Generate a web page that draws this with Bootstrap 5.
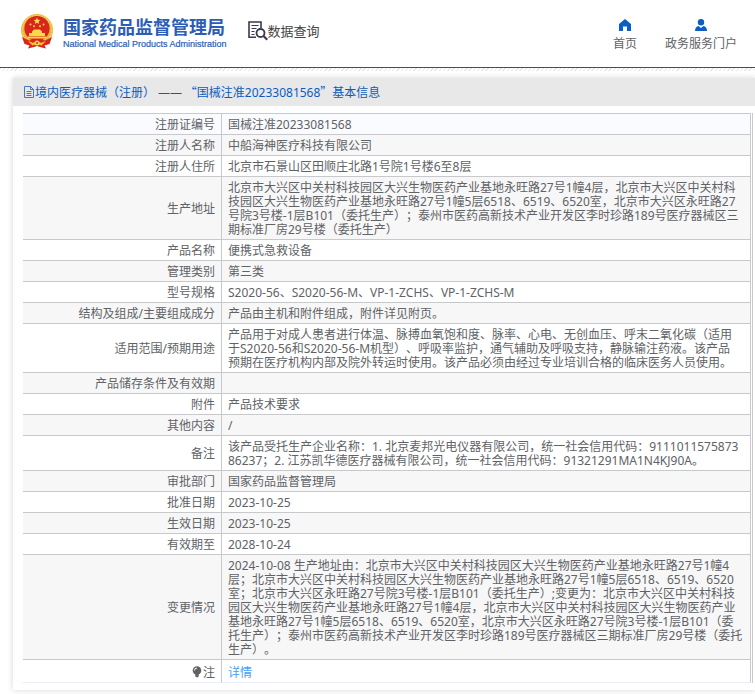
<!DOCTYPE html>
<html lang="zh-CN">
<head>
<meta charset="utf-8">
<meta name="viewport" content="width=device-width, initial-scale=1">
<title>国家药品监督管理局 数据查询</title>
<link href="https://cdn.jsdelivr.net/npm/bootstrap@5.3.0/dist/css/bootstrap.min.css" rel="stylesheet">
<style>
body{font-family:"Noto Sans","Noto Sans CJK SC",sans-serif;font-size:12px;line-height:14px;color:#606266;background:#fff;text-spacing-trim:space-all;font-feature-settings:"chws" 0}
a{text-decoration:none}
.site-head{height:67px;padding:0 18px 6px 20px}
.head-rule{height:4px;border-top:1px solid #0b5cad;background:repeating-linear-gradient(135deg,#e8e8e8 0 1px,#fff 1px 3px)}
.brand-cn{font:700 18px/24px "Noto Sans CJK SC",sans-serif;color:#2b5eb4}
.brand-en{font:9px/12px "Liberation Sans",sans-serif;color:#2b5eb4;-webkit-text-stroke:.2px #2b5eb4}
.brand-text{margin-left:9px;padding-top:2px}
.query{margin-left:21px;font-size:13px;line-height:20px;color:#444}
.top-link{color:#606266;line-height:16px}
.top-link svg{margin-bottom:5px}
.top-nav{gap:28px;padding-top:10px}
.panel{margin:7px 0 4px 13px;box-shadow:0 0 6px rgba(0,0,0,.16);padding-bottom:7px}
.panel-title{background:#e8e8e8;color:#0b5cbd;height:28px;padding:0 10px;font-size:12px;font-weight:400;line-height:14px;margin:0 0 7px}
.wide-quote{font-family:"Noto Sans CJK SC",sans-serif}
.info-wrap{margin:0 2px 0 10px;border-right:1px solid #c8c9cc;padding-right:1px}
.info{width:100%;table-layout:fixed;border-collapse:separate;border-spacing:0}
.info th,.info td{border-top:1px solid #c8c9cc;border-right:1px solid #c8c9cc;padding:4px 6px 2px;height:21px;vertical-align:middle;font-weight:400;white-space:nowrap}
.info th{text-align:right;width:199px}
.info tr:nth-child(even)>*{background:#f7f7f7}
.info tr:first-child>*{background:#fafbfe}
.info tr:last-child>*{border-bottom:1px solid #ebeef5;height:24px;padding:6px 6px 2px}
.info th svg{vertical-align:-1px}
.info a{color:#409eff}
</style>
<script src="https://cdn.jsdelivr.net/npm/bootstrap@5.3.0/dist/js/bootstrap.bundle.min.js"></script>
</head>
<body>
<header>
<div class="site-head d-flex align-items-center">
<svg width="34" height="36" viewBox="0 0 34 36" aria-hidden="true">
<circle cx="17" cy="17" r="16" fill="#e9b63c"/><circle cx="17" cy="17" r="14.600" fill="none" stroke="#f6d465" stroke-width="1.200" stroke-dasharray="2 1"/>
<circle cx="17" cy="15.500" r="12.600" fill="#d9251d"/>
<path d="M17 4.500l1 2.300 2.400.2-1.800 1.600.6 2.400-2.200-1.300-2.200 1.300.6-2.400-1.800-1.600 2.400-.2z" fill="#f8d94c"/>
<g fill="#f8d94c"><circle cx="10.500" cy="11.500" r="1"/><circle cx="23.500" cy="11.500" r="1"/><circle cx="14" cy="13.300" r="1"/><circle cx="20" cy="13.300" r="1"/>
<path d="M12 18.500l2-2h6l2 2v1.500h3v3H9v-3h3zM7.500 23.500h19v2h-19z"/></g>
<path d="M2 24l7 3.500 5-1h6l5 1 7-3.500-2.500 7-5 1.500 1.500 3-6-1.500-3-1-3 1-6 1.500 1.500-3-5-1.500z" fill="#d9251d"/>
<path d="M8 28l5 1.800 4-1.600 4 1.600 5-1.800-4.500 4.500-4.500-1.500-4.500 1.500z" fill="#f0bd3c"/><circle cx="17" cy="30" r="2.500" fill="#f8d94c"/><circle cx="17" cy="30" r="1" fill="#d9251d"/>
</svg>
<div class="brand-text"><div class="brand-cn">国家药品监督管理局</div><div class="brand-en">National Medical Products Administration</div></div>
<div class="query d-flex align-items-center">
<svg width="20" height="20" viewBox="0 0 20 20" fill="none" stroke="#3c3850" aria-hidden="true"><path d="M8 16.200H1V1h12v6" stroke-width="1.600"/><path d="M3.500 4.500h7M3.500 7.500h5M3.500 10.500h3M3.500 13.500h3" stroke-width="1.200"/><circle cx="12.500" cy="12" r="4" stroke-width="1.800"/><path d="M15.500 15l3.800 3.800" stroke-width="2.200"/></svg>
<span>数据查询</span></div>
<nav class="top-nav d-flex ms-auto">
<a class="top-link d-flex flex-column align-items-center" href="#"><svg width="12" height="12" viewBox="0 0 12 12" aria-hidden="true"><path d="M6 0L0 5v7h4V7.500h4V12h4V5z" fill="#0b5fc4"/></svg>首页</a>
<a class="top-link d-flex flex-column align-items-center" href="#"><svg width="12" height="12" viewBox="0 0 12 12" aria-hidden="true"><circle cx="6" cy="3.200" r="3.200" fill="#0b5fc4"/><path d="M0 12c0-3 1.500-4.800 3.500-5L6 9l2.500-2C10.500 7.200 12 9 12 12z" fill="#0b5fc4"/></svg>政务服务门户</a>
</nav>
</div>
<div class="head-rule"></div>
</header>
<main class="panel">
<h1 class="panel-title d-flex align-items-center"><svg width="12" height="12" viewBox="0 0 12 12" fill="none" stroke="#3f78c5" aria-hidden="true"><path d="M1.500.5h6l3 3v8h-9zM7.500.5v3h3M3.500 5.500h5M3.500 7.500h5M3.500 9.500h5"/></svg><span>境内医疗器械（注册） ——<span class="wide-quote"> “</span>国械注准20233081568<span class="wide-quote">”</span>基本信息</span></h1>
<div class="info-wrap">
<table class="info">
<tr><th scope="row">注册证编号</th><td>国械注准20233081568</td></tr>
<tr><th scope="row">注册人名称</th><td>中船海神医疗科技有限公司</td></tr>
<tr><th scope="row">注册人住所</th><td>北京市石景山区田顺庄北路1号院1号楼6至8层</td></tr>
<tr><th scope="row">生产地址</th><td>北京市大兴区中关村科技园区大兴生物医药产业基地永旺路27号1幢4层，北京市大兴区中关村科<br>技园区大兴生物医药产业基地永旺路27号1幢5层6518、6519、6520室，北京市大兴区永旺路27<br>号院3号楼-1层B101（委托生产）；泰州市医药高新技术产业开发区李时珍路189号医疗器械区三<br>期标准厂房29号楼（委托生产）</td></tr>
<tr><th scope="row">产品名称</th><td>便携式急救设备</td></tr>
<tr><th scope="row">管理类别</th><td>第三类</td></tr>
<tr><th scope="row">型号规格</th><td>S2020-56、S2020-56-M、VP-1-ZCHS、VP-1-ZCHS-M</td></tr>
<tr><th scope="row">结构及组成/主要组成成分</th><td>产品由主机和附件组成，附件详见附页。</td></tr>
<tr><th scope="row">适用范围/预期用途</th><td>产品用于对成人患者进行体温、脉搏血氧饱和度、脉率、心电、无创血压、呼末二氧化碳（适用<br>于S2020-56和S2020-56-M机型）、呼吸率监护，通气辅助及呼吸支持，静脉输注药液。该产品<br>预期在医疗机构内部及院外转运时使用。该产品必须由经过专业培训合格的临床医务人员使用。</td></tr>
<tr><th scope="row">产品储存条件及有效期</th><td></td></tr>
<tr><th scope="row">附件</th><td>产品技术要求</td></tr>
<tr><th scope="row">其他内容</th><td>/</td></tr>
<tr><th scope="row">备注</th><td>该产品受托生产企业名称：1. 北京麦邦光电仪器有限公司，统一社会信用代码：9111011575873<br>86237；2. 江苏凯华德医疗器械有限公司，统一社会信用代码：91321291MA1N4KJ90A。</td></tr>
<tr><th scope="row">审批部门</th><td>国家药品监督管理局</td></tr>
<tr><th scope="row">批准日期</th><td>2023-10-25</td></tr>
<tr><th scope="row">生效日期</th><td>2023-10-25</td></tr>
<tr><th scope="row">有效期至</th><td>2028-10-24</td></tr>
<tr><th scope="row">变更情况</th><td>2024-10-08 生产地址由：北京市大兴区中关村科技园区大兴生物医药产业基地永旺路27号1幢4<br>层；北京市大兴区中关村科技园区大兴生物医药产业基地永旺路27号1幢5层6518、6519、6520<br>室；北京市大兴区永旺路27号院3号楼-1层B101（委托生产）;变更为：北京市大兴区中关村科技<br>园区大兴生物医药产业基地永旺路27号1幢4层，北京市大兴区中关村科技园区大兴生物医药产业<br>基地永旺路27号1幢5层6518、6519、6520室，北京市大兴区永旺路27号院3号楼-1层B101（委<br>托生产）；泰州市医药高新技术产业开发区李时珍路189号医疗器械区三期标准厂房29号楼（委托<br>生产）。</td></tr>
<tr><th scope="row"><svg width="11" height="12" viewBox="0 0 11 12" aria-hidden="true"><circle cx="5" cy="4.500" r="4.300" fill="#606266"/><path d="M3.300 8h3.400v2.500L5 11.500l-1.700-1z" fill="#606266"/><path d="M2.500 4.500A2.500 2.500 0 0 1 5 2" fill="none" stroke="#fff"/></svg>注</th><td><a href="#">详情</a></td></tr>
</table>
</div>
</main>
</body>
</html>
